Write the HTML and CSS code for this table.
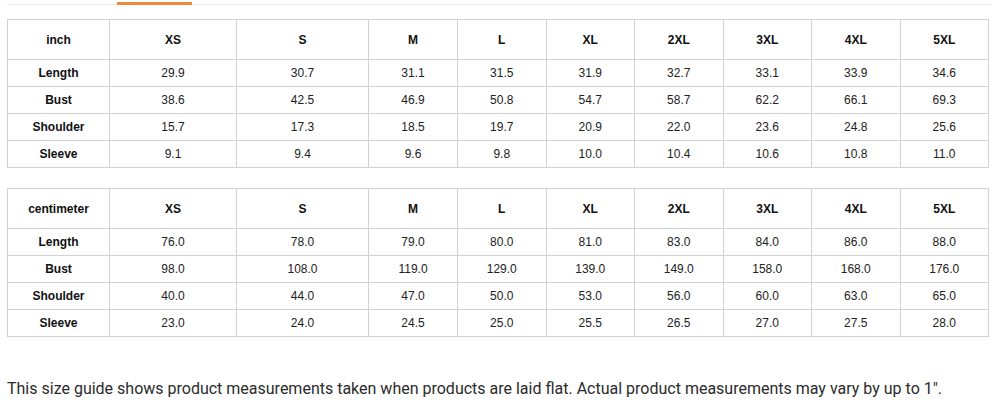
FILE: index.html
```html
<!DOCTYPE html>
<html>
<head>
<meta charset="utf-8">
<link rel="stylesheet" href="styles.css">
</head>
<body>
<div class="page">
  <div class="tabs"><div class="tab-spacer"></div><div class="tab active"></div></div>

  <table class="size-table">
    <colgroup>
      <col class="c-label"><col class="c-xs"><col class="c-s"><col class="c-m"><col class="c-n"><col class="c-n"><col class="c-n"><col class="c-n"><col class="c-n"><col class="c-n">
    </colgroup>
    <thead>
      <tr><th>inch</th><th>XS</th><th>S</th><th>M</th><th>L</th><th>XL</th><th>2XL</th><th>3XL</th><th>4XL</th><th>5XL</th></tr>
    </thead>
    <tbody>
      <tr><th>Length</th><td>29.9</td><td>30.7</td><td>31.1</td><td>31.5</td><td>31.9</td><td>32.7</td><td>33.1</td><td>33.9</td><td>34.6</td></tr>
      <tr><th>Bust</th><td>38.6</td><td>42.5</td><td>46.9</td><td>50.8</td><td>54.7</td><td>58.7</td><td>62.2</td><td>66.1</td><td>69.3</td></tr>
      <tr><th>Shoulder</th><td>15.7</td><td>17.3</td><td>18.5</td><td>19.7</td><td>20.9</td><td>22.0</td><td>23.6</td><td>24.8</td><td>25.6</td></tr>
      <tr><th>Sleeve</th><td>9.1</td><td>9.4</td><td>9.6</td><td>9.8</td><td>10.0</td><td>10.4</td><td>10.6</td><td>10.8</td><td>11.0</td></tr>
    </tbody>
  </table>

  <table class="size-table">
    <colgroup>
      <col class="c-label"><col class="c-xs"><col class="c-s"><col class="c-m"><col class="c-n"><col class="c-n"><col class="c-n"><col class="c-n"><col class="c-n"><col class="c-n">
    </colgroup>
    <thead>
      <tr><th>centimeter</th><th>XS</th><th>S</th><th>M</th><th>L</th><th>XL</th><th>2XL</th><th>3XL</th><th>4XL</th><th>5XL</th></tr>
    </thead>
    <tbody>
      <tr><th>Length</th><td>76.0</td><td>78.0</td><td>79.0</td><td>80.0</td><td>81.0</td><td>83.0</td><td>84.0</td><td>86.0</td><td>88.0</td></tr>
      <tr><th>Bust</th><td>98.0</td><td>108.0</td><td>119.0</td><td>129.0</td><td>139.0</td><td>149.0</td><td>158.0</td><td>168.0</td><td>176.0</td></tr>
      <tr><th>Shoulder</th><td>40.0</td><td>44.0</td><td>47.0</td><td>50.0</td><td>53.0</td><td>56.0</td><td>60.0</td><td>63.0</td><td>65.0</td></tr>
      <tr><th>Sleeve</th><td>23.0</td><td>24.0</td><td>24.5</td><td>25.0</td><td>25.5</td><td>26.5</td><td>27.0</td><td>27.5</td><td>28.0</td></tr>
    </tbody>
  </table>

  <p class="note">This size guide shows product measurements taken when products are laid flat. Actual product measurements may vary by up to 1".</p>
</div>
</body>
</html>
```

FILE: styles.css
```css
html, body {
  margin: 0;
  padding: 0;
  background: #ffffff;
}

.page {
  padding: 0 0 0 7px;
}

.tabs {
  display: flex;
  width: 985px;
  height: 4px;
  border-bottom: 1px solid #ebebeb;
}

.tab-spacer {
  width: 110px;
}

.tab.active {
  width: 75px;
  height: 3px;
  margin-top: 2px;
  background: #f0883a;
}

.size-table {
  width: 981px;
  table-layout: fixed;
  border-collapse: collapse;
  font-family: "Liberation Sans", Arial, sans-serif;
  font-size: 12px;
  color: #222222;
  margin-top: 14px;
}

.size-table + .size-table {
  margin-top: 20px;
}

.c-label { width: 102px; }
.c-xs { width: 127px; }
.c-s { width: 132px; }
.c-m { width: 89px; }
.c-n { width: 88.5px; }

.size-table th,
.size-table td {
  border: 1px solid #d2d2d2;
  padding: 0;
  text-align: center;
  vertical-align: middle;
}

.size-table th {
  font-weight: bold;
  color: #111111;
}

.size-table thead th {
  height: 39px;
}

.size-table tbody th,
.size-table tbody td {
  height: 26px;
}

.note {
  margin: 42px 0 0 0;
  font-family: Roboto, "Liberation Sans", sans-serif;
  font-size: 16px;
  color: #2b2b2b;
}
```
